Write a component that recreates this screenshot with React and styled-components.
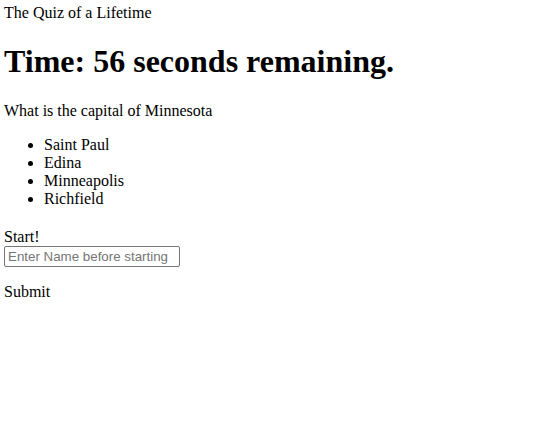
import React from "react";
import styled, { createGlobalStyle } from "styled-components";

const Global = createGlobalStyle`
  body {
    margin: 4px;
    font-family: "Liberation Serif", "Times New Roman", serif;
    font-size: 16px;
    color: #000;
    background: #fff;
  }
`;

const Title = styled.div``;

const Timer = styled.h1`
  font-size: 32px;
  font-weight: bold;
  margin: 21.44px 0;
`;

const Question = styled.p`
  margin: 16px 0;
`;

const Choices = styled.ul`
  margin: 16px 0;
  padding-left: 40px;
  list-style: disc;
`;

const Choice = styled.li``;

const Start = styled.div`
  margin-top: 20px;
`;

const NameInput = styled.input`
  display: block;
  box-sizing: border-box;
  width: 176px;
  height: 21px;
  margin: 0;
  padding: 1px 3px;
  border: 1px solid #767676;
  border-radius: 2px;
  font-family: "Liberation Sans", Arial, sans-serif;
  font-size: 13.33px;
  &::placeholder {
    color: #757575;
  }
`;

const Submit = styled.p`
  margin: 16px 0;
`;

const Wrapper = styled.div`
  & > ${Choices} {
    margin-bottom: 0;
  }
`;

export default function App() {
  const choices = ["Saint Paul", "Edina", "Minneapolis", "Richfield"];
  return (
    <Wrapper>
      <Global />
      <Title>The Quiz of a Lifetime</Title>
      <Timer>Time: 56 seconds remaining.</Timer>
      <Question>What is the capital of Minnesota</Question>
      <Choices>
        {choices.map((c) => (
          <Choice key={c}>{c}</Choice>
        ))}
      </Choices>
      <Start>Start!</Start>
      <NameInput placeholder="Enter Name before starting" />
      <Submit>Submit</Submit>
    </Wrapper>
  );
}
